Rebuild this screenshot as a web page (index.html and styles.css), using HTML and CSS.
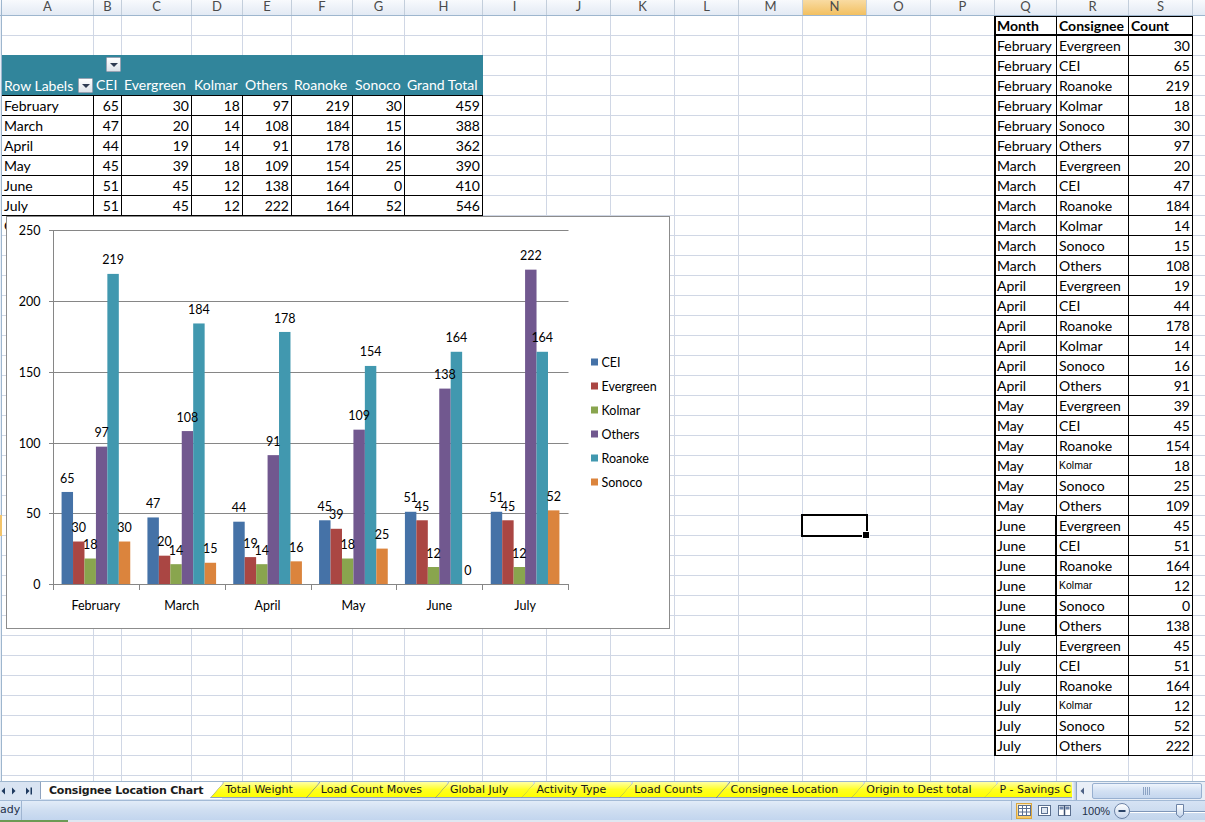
FILE: index.html
```html
<!DOCTYPE html>
<html>
<head>
<meta charset="utf-8">
<title>Consignee Location Chart</title>
<link rel="stylesheet" href="styles.css">
</head>
<body>
<div class="app">
  <div class="colheads">
    <div class="corner"></div>
    <div class="ch w-a">A</div><div class="ch w-b">B</div><div class="ch w-c">C</div><div class="ch w-d">D</div><div class="ch w-e">E</div><div class="ch w-f">F</div><div class="ch w-g">G</div><div class="ch w-h">H</div>
    <div class="ch w-m">I</div><div class="ch w-m">J</div><div class="ch w-m">K</div><div class="ch w-m">L</div><div class="ch w-m">M</div><div class="ch w-m sel">N</div><div class="ch w-m">O</div><div class="ch w-m">P</div>
    <div class="ch w-q">Q</div><div class="ch w-r">R</div><div class="ch w-s">S</div><div class="ch w-t"></div>
  </div>

  <div class="sheet">
    <div class="gridlines">
      <div class="gc w-rh"></div>
      <div class="gc w-a"></div><div class="gc w-b"></div><div class="gc w-c"></div><div class="gc w-d"></div><div class="gc w-e"></div><div class="gc w-f"></div><div class="gc w-g"></div><div class="gc w-h"></div>
      <div class="gc w-m"></div><div class="gc w-m"></div><div class="gc w-m"></div><div class="gc w-m"></div><div class="gc w-m"></div><div class="gc w-m"></div><div class="gc w-m"></div><div class="gc w-m"></div>
      <div class="gc w-q"></div><div class="gc w-r"></div><div class="gc w-s"></div><div class="gc w-t"></div>
    </div>

    <div class="content">
      <div class="rh-sel"></div>

      <div class="pivot">
        <div class="phead">
          <div class="phead-r1"><span></span><span class="btncell"><i class="ddbtn"></i></span></div>
          <div class="phead-r2">
            <span class="rl">Row Labels<i class="ddbtn"></i></span>
            <span>CEI</span><span>Evergreen</span><span>Kolmar</span><span>Others</span><span>Roanoke</span><span>Sonoco</span><span>Grand Total</span>
          </div>
        </div>
        <div class="prow"><span>February</span><span>65</span><span>30</span><span>18</span><span>97</span><span>219</span><span>30</span><span>459</span></div>
        <div class="prow"><span>March</span><span>47</span><span>20</span><span>14</span><span>108</span><span>184</span><span>15</span><span>388</span></div>
        <div class="prow"><span>April</span><span>44</span><span>19</span><span>14</span><span>91</span><span>178</span><span>16</span><span>362</span></div>
        <div class="prow"><span>May</span><span>45</span><span>39</span><span>18</span><span>109</span><span>154</span><span>25</span><span>390</span></div>
        <div class="prow"><span>June</span><span>51</span><span>45</span><span>12</span><span>138</span><span>164</span><span>0</span><span>410</span></div>
        <div class="prow"><span>July</span><span>51</span><span>45</span><span>12</span><span>222</span><span>164</span><span>52</span><span>546</span></div>
      </div>

      <div class="a11">Grand Total</div>

      <div class="rtable">
        <div class="rrow rhead"><span>Month</span><span>Consignee</span><span>Count</span></div>
        <div class="rrow"><span>February</span><span>Evergreen</span><span>30</span></div>
        <div class="rrow"><span>February</span><span>CEI</span><span>65</span></div>
        <div class="rrow"><span>February</span><span>Roanoke</span><span>219</span></div>
        <div class="rrow"><span>February</span><span>Kolmar</span><span>18</span></div>
        <div class="rrow"><span>February</span><span>Sonoco</span><span>30</span></div>
        <div class="rrow"><span>February</span><span>Others</span><span>97</span></div>
        <div class="rrow"><span>March</span><span>Evergreen</span><span>20</span></div>
        <div class="rrow"><span>March</span><span>CEI</span><span>47</span></div>
        <div class="rrow"><span>March</span><span>Roanoke</span><span>184</span></div>
        <div class="rrow"><span>March</span><span>Kolmar</span><span>14</span></div>
        <div class="rrow"><span>March</span><span>Sonoco</span><span>15</span></div>
        <div class="rrow"><span>March</span><span>Others</span><span>108</span></div>
        <div class="rrow"><span>April</span><span>Evergreen</span><span>19</span></div>
        <div class="rrow"><span>April</span><span>CEI</span><span>44</span></div>
        <div class="rrow"><span>April</span><span>Roanoke</span><span>178</span></div>
        <div class="rrow"><span>April</span><span>Kolmar</span><span>14</span></div>
        <div class="rrow"><span>April</span><span>Sonoco</span><span>16</span></div>
        <div class="rrow"><span>April</span><span>Others</span><span>91</span></div>
        <div class="rrow"><span>May</span><span>Evergreen</span><span>39</span></div>
        <div class="rrow"><span>May</span><span>CEI</span><span>45</span></div>
        <div class="rrow"><span>May</span><span>Roanoke</span><span>154</span></div>
        <div class="rrow"><span>May</span><span class="sm">Kolmar</span><span>18</span></div>
        <div class="rrow"><span>May</span><span>Sonoco</span><span>25</span></div>
        <div class="rrow"><span>May</span><span>Others</span><span>109</span></div>
        <div class="rrow jn"><span>June</span><span>Evergreen</span><span>45</span></div>
        <div class="rrow jn"><span>June</span><span>CEI</span><span>51</span></div>
        <div class="rrow jn"><span>June</span><span>Roanoke</span><span>164</span></div>
        <div class="rrow jn"><span>June</span><span class="sm">Kolmar</span><span>12</span></div>
        <div class="rrow jn"><span>June</span><span>Sonoco</span><span>0</span></div>
        <div class="rrow jn"><span>June</span><span>Others</span><span>138</span></div>
        <div class="rrow"><span>July</span><span>Evergreen</span><span>45</span></div>
        <div class="rrow"><span>July</span><span>CEI</span><span>51</span></div>
        <div class="rrow"><span>July</span><span>Roanoke</span><span>164</span></div>
        <div class="rrow"><span>July</span><span class="sm">Kolmar</span><span>12</span></div>
        <div class="rrow"><span>July</span><span>Sonoco</span><span>52</span></div>
        <div class="rrow"><span>July</span><span>Others</span><span>222</span></div>
      </div>

      <div class="selcell"></div>

      <div class="chart">
        <svg class="chartsvg" width="662" height="411" viewBox="0 0 662 411">
          <g stroke="#868686" stroke-width="1" fill="none">
            <path d="M42 13.5H561.5M42 84.5H561.5M42 155.5H561.5M42 226.5H561.5M42 296.5H561.5"/>
            <path d="M46.5 13V368M42 367.5H562M46.5 367.5V373M132.5 367.5V373M218.5 367.5V373M304.5 367.5V373M389.5 367.5V373M475.5 367.5V373M561.5 367.5V373"/>
          </g>
          <g class="ylab" text-anchor="end">
            <text x="33.5" y="17.5">250</text>
            <text x="33.5" y="88.5">200</text>
            <text x="33.5" y="159.5">150</text>
            <text x="33.5" y="230.5">100</text>
            <text x="33.5" y="300.5">50</text>
            <text x="33.5" y="371.5">0</text>
          </g>
          <g>
            <rect fill="#4572a7" x="54.58" y="274.96" width="11.45" height="92.04"/>
            <rect fill="#aa4643" x="66.03" y="324.52" width="11.45" height="42.48"/>
            <rect fill="#89a54e" x="77.47" y="341.51" width="11.45" height="25.49"/>
            <rect fill="#71588f" x="88.92" y="229.65" width="11.45" height="137.35"/>
            <rect fill="#4198af" x="100.36" y="56.90" width="11.45" height="310.10"/>
            <rect fill="#db843d" x="111.80" y="324.52" width="11.45" height="42.48"/>

            <rect fill="#4572a7" x="140.42" y="300.45" width="11.45" height="66.55"/>
            <rect fill="#aa4643" x="151.86" y="338.68" width="11.45" height="28.32"/>
            <rect fill="#89a54e" x="163.31" y="347.18" width="11.45" height="19.82"/>
            <rect fill="#71588f" x="174.75" y="214.07" width="11.45" height="152.93"/>
            <rect fill="#4198af" x="186.19" y="106.46" width="11.45" height="260.54"/>
            <rect fill="#db843d" x="197.64" y="345.76" width="11.45" height="21.24"/>

            <rect fill="#4572a7" x="226.25" y="304.70" width="11.45" height="62.30"/>
            <rect fill="#aa4643" x="237.69" y="340.10" width="11.45" height="26.90"/>
            <rect fill="#89a54e" x="249.14" y="347.18" width="11.45" height="19.82"/>
            <rect fill="#71588f" x="260.58" y="238.14" width="11.45" height="128.86"/>
            <rect fill="#4198af" x="272.03" y="114.95" width="11.45" height="252.05"/>
            <rect fill="#db843d" x="283.47" y="344.34" width="11.45" height="22.66"/>

            <rect fill="#4572a7" x="312.08" y="303.28" width="11.45" height="63.72"/>
            <rect fill="#aa4643" x="323.53" y="311.78" width="11.45" height="55.22"/>
            <rect fill="#89a54e" x="334.97" y="341.51" width="11.45" height="25.49"/>
            <rect fill="#71588f" x="346.42" y="212.66" width="11.45" height="154.34"/>
            <rect fill="#4198af" x="357.86" y="148.94" width="11.45" height="218.06"/>
            <rect fill="#db843d" x="369.31" y="331.60" width="11.45" height="35.40"/>

            <rect fill="#4572a7" x="397.92" y="294.78" width="11.45" height="72.22"/>
            <rect fill="#aa4643" x="409.36" y="303.28" width="11.45" height="63.72"/>
            <rect fill="#89a54e" x="420.81" y="350.01" width="11.45" height="16.99"/>
            <rect fill="#71588f" x="432.25" y="171.59" width="11.45" height="195.41"/>
            <rect fill="#4198af" x="443.69" y="134.78" width="11.45" height="232.22"/>

            <rect fill="#4572a7" x="483.75" y="294.78" width="11.45" height="72.22"/>
            <rect fill="#aa4643" x="495.19" y="303.28" width="11.45" height="63.72"/>
            <rect fill="#89a54e" x="506.64" y="350.01" width="11.45" height="16.99"/>
            <rect fill="#71588f" x="518.08" y="52.65" width="11.45" height="314.35"/>
            <rect fill="#4198af" x="529.53" y="134.78" width="11.45" height="232.22"/>
            <rect fill="#db843d" x="540.97" y="293.37" width="11.45" height="73.63"/>
          </g>
          <g class="dlab" text-anchor="middle">
            <text x="60.30" y="265.5">65</text><text x="71.75" y="315">30</text><text x="83.19" y="332">18</text><text x="94.64" y="220.2">97</text><text x="106.08" y="47.4">219</text><text x="117.52" y="315">30</text>
            <text x="146.14" y="291">47</text><text x="157.58" y="329.2">20</text><text x="169.03" y="337.7">14</text><text x="180.47" y="204.6">108</text><text x="191.91" y="97">184</text><text x="203.36" y="336.3">15</text>
            <text x="231.97" y="295.2">44</text><text x="243.41" y="330.6">19</text><text x="254.86" y="337.7">14</text><text x="266.30" y="228.6">91</text><text x="277.75" y="105.5">178</text><text x="289.19" y="334.8">16</text>
            <text x="317.80" y="293.8">45</text><text x="329.25" y="302.3">39</text><text x="340.69" y="332">18</text><text x="352.14" y="203.2">109</text><text x="363.58" y="139.4">154</text><text x="375.03" y="322.1">25</text>
            <text x="403.64" y="285.3">51</text><text x="415.08" y="293.8">45</text><text x="426.53" y="340.5">12</text><text x="437.97" y="162.1">138</text><text x="449.41" y="125.3">164</text><text x="460.86" y="357.5">0</text>
            <text x="489.47" y="285.3">51</text><text x="500.91" y="293.8">45</text><text x="512.36" y="340.5">12</text><text x="523.80" y="43.2">222</text><text x="535.25" y="125.3">164</text><text x="546.69" y="283.9">52</text>
          </g>
          <g class="xlab" text-anchor="middle">
            <text x="88.9" y="392.5">February</text>
            <text x="174.75" y="392.5">March</text>
            <text x="260.6" y="392.5">April</text>
            <text x="346.4" y="392.5">May</text>
            <text x="432.25" y="392.5">June</text>
            <text x="518.1" y="392.5">July</text>
          </g>
          <g class="legend">
            <rect fill="#4572a7" x="584" y="141.5" width="7" height="7"/><text x="594.5" y="149.5">CEI</text>
            <rect fill="#aa4643" x="584" y="165.5" width="7" height="7"/><text x="594.5" y="173.5">Evergreen</text>
            <rect fill="#89a54e" x="584" y="189.5" width="7" height="7"/><text x="594.5" y="197.5">Kolmar</text>
            <rect fill="#71588f" x="584" y="213.5" width="7" height="7"/><text x="594.5" y="221.5">Others</text>
            <rect fill="#4198af" x="584" y="237.5" width="7" height="7"/><text x="594.5" y="245.5">Roanoke</text>
            <rect fill="#db843d" x="584" y="261.5" width="7" height="7"/><text x="594.5" y="269.5">Sonoco</text>
          </g>
        </svg>
      </div>
    </div>
  </div>

  <div class="tabbar">
    <div class="tabnav">
      <svg width="40" height="18" viewBox="0 0 40 18">
        <g fill="#1e3a5f">
          <polygon points="5,5.5 1.5,9 5,12.5"/>
          <polygon points="12,5.5 15.5,9 12,12.5"/>
          <polygon points="26,5.5 29.5,9 26,12.5"/>
          <rect x="30.5" y="5.5" width="1.5" height="7"/>
        </g>
      </svg>
    </div>
    <div class="tabs">
      <div class="tab active">Consignee Location Chart</div>
      <div class="tab">Total Weight</div>
      <div class="tab">Load Count Moves</div>
      <div class="tab">Global July</div>
      <div class="tab">Activity Type</div>
      <div class="tab">Load Counts</div>
      <div class="tab">Consignee Location</div>
      <div class="tab">Origin to Dest total</div>
      <div class="tab">P - Savings Chart</div>
    </div>
    <div class="hscroll">
      <div class="splitter"></div>
      <div class="sarrow">
        <svg width="10" height="18" viewBox="0 0 10 18"><polygon points="7,5.5 3.5,9 7,12.5" fill="#4d6185"/></svg>
      </div>
      <div class="thumb">
        <svg width="10" height="8" viewBox="0 0 10 8"><path d="M1.5 0V8M3.5 0V8M5.5 0V8M7.5 0V8" stroke="#8ca3c4" stroke-width="1"/></svg>
      </div>
    </div>
  </div>

  <div class="status">
    <span class="st-ready">ady</span>
    <div class="st-fill"></div>
    <div class="st-right">
      <div class="views">
        <span class="vbtn on">
          <svg width="13" height="11" viewBox="0 0 13 11"><rect x="0.5" y="0.5" width="12" height="10" fill="#fff" stroke="#5a6f8f"/><path d="M4.5 0.5V10.5M8.5 0.5V10.5M0.5 3.5H12.5M0.5 7H12.5" stroke="#5a6f8f"/></svg>
        </span>
        <span class="vbtn">
          <svg width="13" height="11" viewBox="0 0 13 11"><rect x="0.5" y="0.5" width="12" height="10" fill="#fff" stroke="#5a6f8f"/><rect x="3.5" y="2.5" width="6" height="6" fill="#dfe7f2" stroke="#5a6f8f"/></svg>
        </span>
        <span class="vbtn">
          <svg width="13" height="11" viewBox="0 0 13 11"><rect x="0.5" y="0.5" width="12" height="10" fill="#fff" stroke="#5a6f8f"/><path d="M6.5 0.5V10.5" stroke="#3a4f70" stroke-width="1.5"/><rect x="1.5" y="1.5" width="4" height="3" fill="#6f86aa"/><rect x="7.5" y="1.5" width="4" height="3" fill="#6f86aa"/></svg>
        </span>
      </div>
      <span class="zpct">100%</span>
      <svg class="zslider" width="92" height="20" viewBox="0 0 92 20">
        <defs>
          <linearGradient id="zb" x1="0" y1="0" x2="0" y2="1"><stop offset="0" stop-color="#ffffff"/><stop offset="1" stop-color="#c4d5ec"/></linearGradient>
        </defs>
        <circle cx="9" cy="10" r="7.5" fill="url(#zb)" stroke="#6d83a6"/>
        <path d="M5.5 10H12.5" stroke="#2b4468" stroke-width="2"/>
        <path d="M17 10.5H92" stroke="#7f96b8" stroke-width="1"/>
        <path d="M17 11.5H92" stroke="#ffffff" stroke-width="1"/>
        <path d="M63.5 3.5H70.5V13.5L67 16.5L63.5 13.5Z" fill="url(#zb)" stroke="#6d83a6"/>
      </svg>
    </div>
  </div>
  <div class="bottomline"><span class="green"></span></div>
</div>
</body>
</html>
```

FILE: styles.css
```css
* { box-sizing: border-box; }
html, body { margin: 0; padding: 0; }
body {
  width: 1205px;
  height: 822px;
  overflow: hidden;
  background: #ffffff;
  font-family: Lato, "Liberation Sans", sans-serif;
  color: #000;
}
.app { display: flex; flex-direction: column; width: 1205px; height: 822px; overflow: hidden; }

/* widths shared by headers and gridline columns */
.w-rh { width: 2px; }
.w-a { width: 92px; }
.w-b { width: 28px; }
.w-c { width: 70px; }
.w-d { width: 51px; }
.w-e { width: 49px; }
.w-f { width: 61px; }
.w-g { width: 52px; }
.w-h { width: 78px; }
.w-m { width: 64px; }
.w-q { width: 62px; }
.w-r { width: 72px; }
.w-s { width: 64px; }
.w-t { flex: 1 1 auto; }

/* column headers */
.colheads {
  flex: none;
  display: flex;
  height: 16px;
  border-bottom: 1px solid #9eb6ce;
  background: linear-gradient(#f8fafd, #e3eaf4);
}
.corner { flex: none; width: 2px; border-right: 1px solid #9eb6ce; }
.ch {
  flex: none;
  border-right: 1px solid #c3cedb;
  font-size: 13px;
  line-height: 13px;
  color: #4b4b4b;
  text-align: center;
}
.ch.w-t { flex: 1 1 auto; border-right: 0; }
.ch.sel { background: linear-gradient(#f9dba2, #f2c061); }

/* sheet */
.sheet { flex: none; display: grid; height: 765px; overflow: hidden; }
.gridlines, .content { grid-area: 1 / 1; }
.gridlines {
  display: flex;
  height: 780px;
  background: repeating-linear-gradient(#ffffff 0 19px, #d0d7e5 19px 20px);
}
.gc { flex: none; border-right: 1px solid #d0d7e5; }
.gc.w-rh { border-right-color: #9eb6ce; background: #e8eef6; }
.gc.w-t { flex: 1 1 auto; border-right: 0; }

.content {
  position: relative;
  display: grid;
  grid-template-columns: 2px 92px 28px 70px 51px 49px 61px 52px 78px repeat(8, 64px) 62px 72px 64px 1fr;
  grid-template-rows: repeat(39, 20px);
  font-size: 14px;
}

.rh-sel { grid-column: 1; grid-row: 26; margin-top: -1px; background: #f3c46a; }

/* pivot table */
.pivot { grid-column: 2 / 10; grid-row: 3 / 11; margin-top: -1px; display: flex; flex-direction: column; }
.phead { background: #31859b; color: #ffffff; border-bottom: 1px solid #000; }
.phead-r1, .phead-r2, .prow {
  display: grid;
  grid-template-columns: 92px 28px 70px 51px 49px 61px 52px 78px;
}
.phead-r1 { height: 21px; }
.phead-r2 { height: 19px; line-height: 18px; }
.phead-r2 > span { padding-left: 2px; white-space: nowrap; }
.phead-r2 > span.rl { display: flex; align-items: center; justify-content: space-between; padding-left: 2px; padding-right: 1px; }
.btncell { display: flex; align-items: flex-start; justify-content: flex-end; padding: 2px 1px 0 0; }
.ddbtn {
  display: block;
  width: 15px;
  height: 15px;
  border: 1px solid #98a3b3;
  border-radius: 1px;
  background: linear-gradient(#ffffff, #dde3ea);
  position: relative;
}
.ddbtn::after {
  content: "";
  position: absolute;
  left: 3px;
  top: 5px;
  border-left: 4px solid transparent;
  border-right: 4px solid transparent;
  border-top: 4px solid #2e3b52;
}
.prow { height: 20px; background: #ffffff; }
.prow > span {
  border-right: 1px solid #000;
  border-bottom: 1px solid #000;
  line-height: 19px;
  padding: 0 2px;
  text-align: right;
  white-space: nowrap;
  overflow: hidden;
}
.prow > span:first-child { text-align: left; padding-left: 2px; }

.a11 { grid-column: 2; grid-row: 11; line-height: 19px; padding-left: 2px; white-space: nowrap; overflow: hidden; }

/* right table */
.rtable { grid-column: 18 / 21; grid-row: 1 / 38; margin: -1px 0 0 -1px; background: #fff; }
.rrow { display: grid; grid-template-columns: 63px 72px 64px; height: 20px; }
.rrow > span {
  border-right: 1px solid #000;
  border-bottom: 1px solid #000;
  padding: 0 2px;
  line-height: 19px;
  white-space: nowrap;
  overflow: hidden;
}
.rrow > span:first-child { border-left: 2px solid #000; padding-left: 1px; }
.rrow > span:last-child { text-align: right; }
.rrow.rhead { height: 21px; font-weight: 700; }
.rrow.rhead > span { border-top: 2px solid #000; border-bottom: 2px solid #000; line-height: 17px; }
.rrow.rhead > span:last-child { text-align: left; }
.rrow.jn > span:first-child { border-right-width: 2px; }
.rrow > span.sm { font-family: "Liberation Sans", sans-serif; font-size: 10.5px; }

/* selected cell */
.selcell {
  grid-column: 15;
  grid-row: 26;
  margin: -2px -1px -1px -2px;
  border: 2px solid #000;
  position: relative;
}
.selcell::after {
  content: "";
  position: absolute;
  right: -4px;
  bottom: -4px;
  width: 6px;
  height: 6px;
  background: #000;
  border: 1px solid #fff;
}

/* chart */
.chart {
  position: absolute;
  left: 6px;
  top: 200px;
  width: 664px;
  height: 413px;
  border: 1px solid #8c8c8c;
  background: #ffffff;
}
.chartsvg { display: block; }
.chartsvg text { font-family: Lato, "Liberation Sans", sans-serif; font-size: 12.5px; fill: #000; }

/* sheet tabs */
.tabbar {
  flex: none;
  display: flex;
  height: 19px;
  background: #d9e4f2;
  border-top: 1px solid #9eb6ce;
}
.tabnav { flex: none; width: 40px; height: 18px; }
.tabnav svg { display: block; }
.tabs { flex: 1 1 auto; display: flex; overflow: hidden; height: 17px; font-family: "DejaVu Sans", sans-serif; font-size: 11px; }
.tab {
  flex: none;
  position: relative;
  height: 16px;
  line-height: 16px;
  padding: 0 25px 0 15px;
  margin-left: -12px;
  white-space: nowrap;
  color: #1b1b1b;
  background: linear-gradient(#ffffa6, #ffff24 50%, #ffff00);
  clip-path: polygon(0 100%, 14px 0, 100% 0, 100% 100%);
  border-bottom: 1px solid #8fa3bf;
}
.tab::before {
  content: "";
  position: absolute;
  left: 0;
  top: 0;
  width: 14px;
  height: 16px;
  background: linear-gradient(to bottom right, transparent calc(50% - 0.8px), #6f7f96 50%, transparent calc(50% + 0.8px));
}
.tab.active {
  margin-left: 0;
  padding: 0 19px 0 8px;
  height: 17px;
  line-height: 17px;
  background: #ffffff;
  font-weight: 700;
  letter-spacing: -0.2px;
  clip-path: none;
  border-bottom: 0;
  border-left: 1px solid #8fa3bf;
}
.tab.active::before { display: none; }

.hscroll { flex: none; width: 133px; display: flex; height: 18px; background: #e9eff7; }
.splitter { width: 5px; background: linear-gradient(90deg, #f4f7fb, #b9c9de); border-right: 1px solid #8ea4c2; }
.sarrow { width: 15px; }
.sarrow svg { display: block; }
.thumb {
  flex: 1 1 auto;
  margin: 1px 3px 1px 0;
  border: 1px solid #98b0d0;
  border-radius: 2px;
  background: linear-gradient(#eef4fc, #d3e1f3 50%, #c4d6ee);
  display: flex;
  align-items: center;
  justify-content: center;
}
.thumb svg { display: block; }

/* status bar */
.status {
  flex: none;
  display: flex;
  align-items: stretch;
  height: 20px;
  background: linear-gradient(#e2ecf8, #cfdef1 50%, #c2d5ee);
  border-top: 1px solid #a3bad6;
  font-family: "DejaVu Sans", sans-serif;
  font-size: 11px;
  color: #1f2f48;
}
.st-ready { width: 22px; border-right: 1px solid #9fb5d1; line-height: 18px; overflow: hidden; white-space: nowrap; text-align: right; padding-right: 2px; }
.st-fill { flex: 1 1 auto; }
.st-right {
  flex: none;
  width: 194px;
  display: flex;
  align-items: center;
  border-left: 1px solid #9fb5d1;
  background: linear-gradient(#d6e3f4, #c3d5ec);
}
.views { display: flex; gap: 4px; padding-left: 4px; }
.vbtn { display: flex; align-items: center; justify-content: center; width: 16px; height: 16px; }
.vbtn.on { background: linear-gradient(#fde9b9, #f8c960); border: 1px solid #d9a640; }
.vbtn svg { display: block; }
.zpct { font-family: "Liberation Sans", sans-serif; font-size: 11px; margin-left: 10px; width: 28px; }
.zslider { display: block; margin-left: 3px; }

.bottomline { flex: none; height: 2px; background: #dfe7f1; display: flex; }
.bottomline .green { width: 68px; background: #6c9a54; }
```
